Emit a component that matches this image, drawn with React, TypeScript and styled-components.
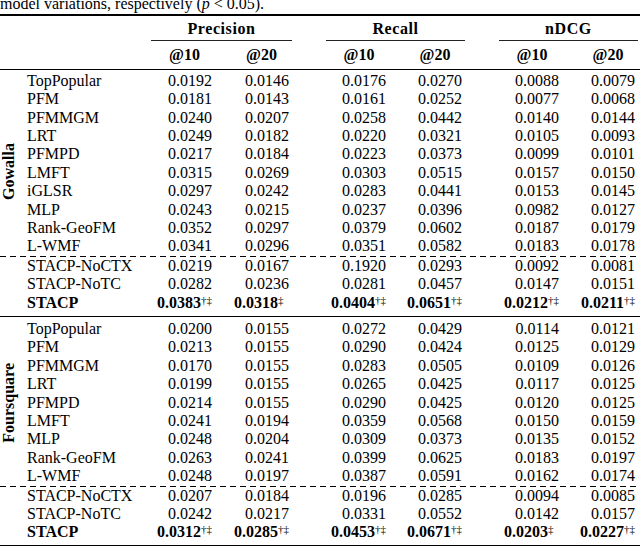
import React from "react";
import styled, { createGlobalStyle } from "styled-components";

const GlobalStyle = createGlobalStyle`
  html, body {
    margin: 0;
    padding: 0;
    background: #fff;
    overflow: hidden;
  }
  body {
    font-family: "Liberation Serif", "Times New Roman", serif;
    color: #000;
  }
`;

// label | method | P@10 P@20 | gap | R@10 R@20 | gap | N@10 N@20
const COLS = "22px 129px 77px 77px 21px 76px 76px 21px 76px 76px";

const Page = styled.div`
  width: 640px;
  height: 546px;
  overflow: hidden;
  font-size: 16px;
`;

const Caption = styled.div`
  margin-top: -4px;
  line-height: 16px;
  white-space: nowrap;
  em {
    font-style: italic;
  }
`;

const Rule = styled.div<{ $weight: number; $gap?: number }>`
  height: ${(p) => p.$weight}px;
  margin-top: ${(p) => p.$gap ?? 0}px;
  background: #000;
`;

const HeadGrid = styled.div`
  display: grid;
  grid-template-columns: ${COLS};
  line-height: 18.4px;
  font-weight: bold;
`;

const GroupHead = styled.div<{ $col: number }>`
  grid-column: ${(p) => p.$col} / span 2;
  grid-row: 1;
  margin-right: 13px;
  padding: 4px 0 2px;
  border-bottom: 1px solid #222;
  text-align: center;
  letter-spacing: 0.6px;
`;

const SubHead = styled.div<{ $col: number }>`
  grid-column: ${(p) => p.$col};
  grid-row: 2;
  padding: 5px 10px 4px 0;
  text-align: center;
`;

const Section = styled.div<{ $top: number; $bottom: number }>`
  display: grid;
  grid-template-columns: ${COLS};
  line-height: 18.4px;
  padding: ${(p) => p.$top}px 0 ${(p) => p.$bottom}px;
`;

const GroupLabel = styled.div<{ $rows: number; $shift: number }>`
  grid-column: 1;
  grid-row: 1 / span ${(p) => p.$rows};
  align-self: center;
  justify-self: start;
  writing-mode: vertical-rl;
  transform: rotate(180deg);
  font-weight: bold;
  margin-top: ${(p) => p.$shift}px;
  white-space: nowrap;
`;

const DashRule = styled.div`
  grid-column: 1 / -1;
  height: 1px;
  background: repeating-linear-gradient(to right, #000 0 6px, transparent 6px 10px);
`;

const Method = styled.div<{ $bold?: boolean }>`
  grid-column: 2;
  padding-left: 5px;
  font-weight: ${(p) => (p.$bold ? "bold" : "normal")};
  white-space: nowrap;
`;

const Num = styled.div<{ $col: number; $bold?: boolean }>`
  grid-column: ${(p) => p.$col};
  text-align: right;
  padding-right: 16px;
  font-weight: ${(p) => (p.$bold ? "bold" : "normal")};
  white-space: nowrap;
`;

const Sup = styled.span`
  font-size: 11px;
  font-weight: normal;
  vertical-align: 4px;
  line-height: 0;
`;

const Phantom = styled.span`
  visibility: hidden;
`;

interface IRow {
  name: string;
  vals: string[];
  bold?: boolean;
}

const NUM_COLS = [3, 4, 6, 7, 9, 10];

const gowallaBase: IRow[] = [
  { name: "TopPopular", vals: ["0.0192", "0.0146", "0.0176", "0.0270", "0.0088", "0.0079"] },
  { name: "PFM", vals: ["0.0181", "0.0143", "0.0161", "0.0252", "0.0077", "0.0068"] },
  { name: "PFMMGM", vals: ["0.0240", "0.0207", "0.0258", "0.0442", "0.0140", "0.0144"] },
  { name: "LRT", vals: ["0.0249", "0.0182", "0.0220", "0.0321", "0.0105", "0.0093"] },
  { name: "PFMPD", vals: ["0.0217", "0.0184", "0.0223", "0.0373", "0.0099", "0.0101"] },
  { name: "LMFT", vals: ["0.0315", "0.0269", "0.0303", "0.0515", "0.0157", "0.0150"] },
  { name: "iGLSR", vals: ["0.0297", "0.0242", "0.0283", "0.0441", "0.0153", "0.0145"] },
  { name: "MLP", vals: ["0.0243", "0.0215", "0.0237", "0.0396", "0.0982", "0.0127"] },
  { name: "Rank-GeoFM", vals: ["0.0352", "0.0297", "0.0379", "0.0602", "0.0187", "0.0179"] },
  { name: "L-WMF", vals: ["0.0341", "0.0296", "0.0351", "0.0582", "0.0183", "0.0178"] },
];

const gowallaOurs: IRow[] = [
  { name: "STACP-NoCTX", vals: ["0.0219", "0.0167", "0.1920", "0.0293", "0.0092", "0.0081"] },
  { name: "STACP-NoTC", vals: ["0.0282", "0.0236", "0.0281", "0.0457", "0.0147", "0.0151"] },
  {
    name: "STACP",
    bold: true,
    vals: ["0.0383|†‡", "0.0318|‡", "0.0404|†‡", "0.0651|†‡", "0.0212|†‡", "0.0211|†‡"],
  },
];

const foursquareBase: IRow[] = [
  { name: "TopPopular", vals: ["0.0200", "0.0155", "0.0272", "0.0429", "0.0114", "0.0121"] },
  { name: "PFM", vals: ["0.0213", "0.0155", "0.0290", "0.0424", "0.0125", "0.0129"] },
  { name: "PFMMGM", vals: ["0.0170", "0.0155", "0.0283", "0.0505", "0.0109", "0.0126"] },
  { name: "LRT", vals: ["0.0199", "0.0155", "0.0265", "0.0425", "0.0117", "0.0125"] },
  { name: "PFMPD", vals: ["0.0214", "0.0155", "0.0290", "0.0425", "0.0120", "0.0125"] },
  { name: "LMFT", vals: ["0.0241", "0.0194", "0.0359", "0.0568", "0.0150", "0.0159"] },
  { name: "MLP", vals: ["0.0248", "0.0204", "0.0309", "0.0373", "0.0135", "0.0152"] },
  { name: "Rank-GeoFM", vals: ["0.0263", "0.0241", "0.0399", "0.0625", "0.0183", "0.0197"] },
  { name: "L-WMF", vals: ["0.0248", "0.0197", "0.0387", "0.0591", "0.0162", "0.0174"] },
];

const foursquareOurs: IRow[] = [
  { name: "STACP-NoCTX", vals: ["0.0207", "0.0184", "0.0196", "0.0285", "0.0094", "0.0085"] },
  { name: "STACP-NoTC", vals: ["0.0242", "0.0217", "0.0331", "0.0552", "0.0142", "0.0157"] },
  {
    name: "STACP",
    bold: true,
    vals: ["0.0312|†‡", "0.0285|†‡", "0.0453|†‡", "0.0671|†‡", "0.0203|‡", "0.0227|†‡"],
  },
];

function Value({ raw }: { raw: string }) {
  const [num, marks] = raw.split("|");
  if (!marks) return <>{num}</>;
  return (
    <>
      {num}
      <Sup>
        {marks}
        {marks.length === 1 && <Phantom>†</Phantom>}
      </Sup>
    </>
  );
}

function Rows({ rows }: { rows: IRow[] }) {
  return (
    <>
      {rows.map((row) => (
        <React.Fragment key={row.name}>
          <Method $bold={row.bold}>{row.name}</Method>
          {row.vals.map((v, i) => (
            <Num key={i} $col={NUM_COLS[i]} $bold={row.bold}>
              <Value raw={v} />
            </Num>
          ))}
        </React.Fragment>
      ))}
    </>
  );
}

export default function App() {
  return (
    <Page>
      <GlobalStyle />
      <Caption>
        model variations, respectively (<em>p</em> &lt; 0.05).
      </Caption>
      <Rule $weight={2} $gap={2} />
      <HeadGrid>
        <GroupHead $col={3}>Precision</GroupHead>
        <GroupHead $col={6}>Recall</GroupHead>
        <GroupHead $col={9}>nDCG</GroupHead>
        {[3, 4, 6, 7, 9, 10].map((c, i) => (
          <SubHead key={c} $col={c}>
            {i % 2 === 0 ? "@10" : "@20"}
          </SubHead>
        ))}
      </HeadGrid>
      <Rule $weight={1} />
      <Section $top={2} $bottom={3.5}>
        <GroupLabel $rows={10} $shift={16}>
          Gowalla
        </GroupLabel>
        <Rows rows={gowallaBase} />
        <DashRule />
        <Rows rows={gowallaOurs} />
      </Section>
      <Rule $weight={1} />
      <Section $top={3.3} $bottom={3.5}>
        <GroupLabel $rows={9} $shift={0}>
          Foursquare
        </GroupLabel>
        <Rows rows={foursquareBase} />
        <DashRule />
        <Rows rows={foursquareOurs} />
      </Section>
      <Rule $weight={2} />
    </Page>
  );
}
